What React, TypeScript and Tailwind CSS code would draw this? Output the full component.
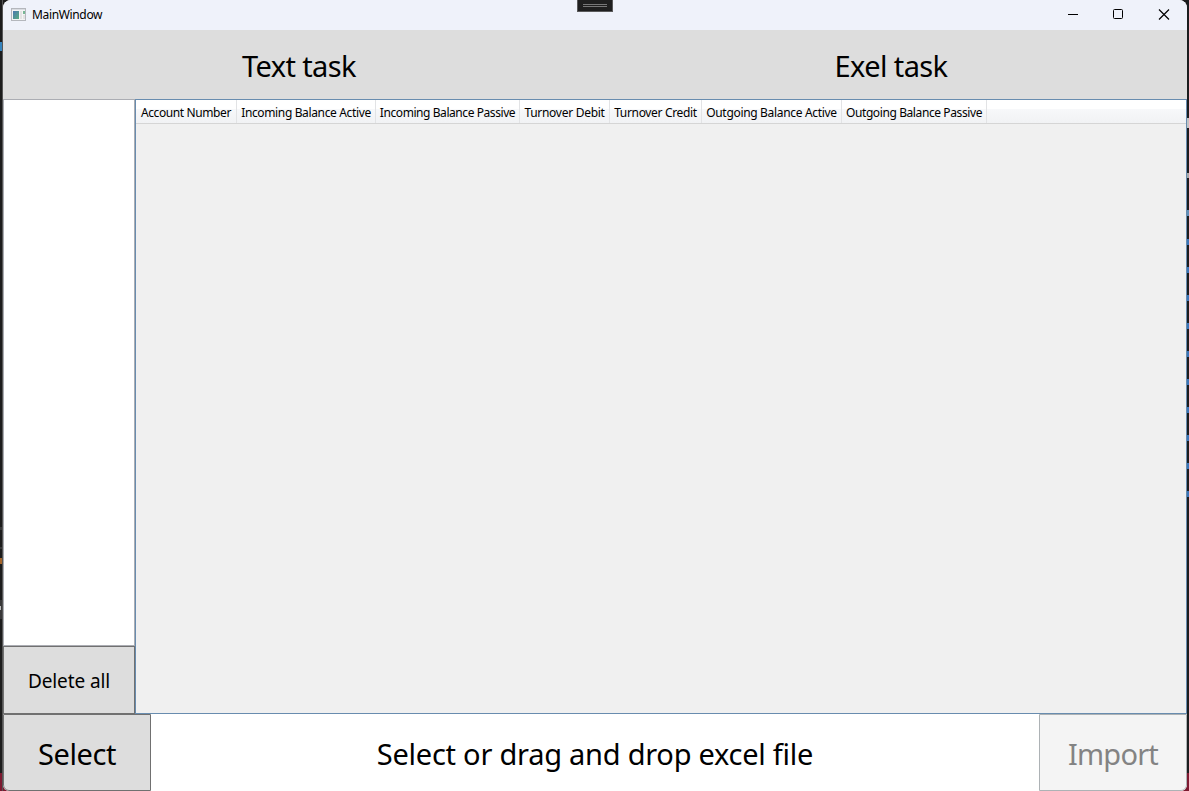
import React from "react";

const columns = [
  { name: "Account Number", width: "w-[101px]", tracking: "tracking-[-0.39px]" },
  { name: "Incoming Balance Active", width: "w-[139px]", tracking: "tracking-[-0.36px]" },
  { name: "Incoming Balance Passive", width: "w-[144px]", tracking: "tracking-[-0.43px]" },
  { name: "Turnover Debit", width: "w-[90px]", tracking: "tracking-[-0.28px]" },
  { name: "Turnover Credit", width: "w-[92px]", tracking: "tracking-[-0.33px]" },
  { name: "Outgoing Balance Active", width: "w-[140px]", tracking: "tracking-[-0.32px]" },
  { name: "Outgoing Balance Passive", width: "w-[145px]", tracking: "tracking-[-0.4px]" },
];

function AppIcon() {
  return (
    <svg width="15" height="14" viewBox="0 0 15 14" shapeRendering="crispEdges">
      <defs>
        <linearGradient id="pane" x1="0" y1="0" x2="1" y2="1">
          <stop offset="0" stopColor="#4b78b0" />
          <stop offset="1" stopColor="#58ad80" />
        </linearGradient>
      </defs>
      <rect x="0.5" y="0.5" width="14" height="12" fill="#f4f4f4" stroke="#b4b7bc" />
      <rect x="1" y="1" width="13" height="1" fill="#d9dce1" />
      <rect x="2" y="3" width="6" height="8" fill="url(#pane)" />
      <rect x="9" y="3" width="2" height="8" fill="#e3e3e3" />
      <rect x="12" y="3" width="2" height="3" fill="#78b795" />
      <rect x="12" y="7" width="2" height="4" fill="#e3e3e3" />
    </svg>
  );
}

function TitleBar() {
  return (
    <header className="relative flex h-[30px] shrink-0 items-center bg-[#eff2fa] pl-2">
      <AppIcon />
      <span className="ml-[6px] text-[12px] leading-4 tracking-[-0.35px]">MainWindow</span>
      <div className="absolute left-[574px] top-0 flex h-3 w-9 flex-col items-center gap-px border border-t-0 border-[#5a5a5a] bg-[#1f1f1f] pt-1">
        <div className="h-px w-6 bg-[#777]" />
        <div className="h-px w-6 bg-[#777]" />
      </div>
      <div className="ml-auto flex pr-px">
        <svg width="46" height="28" fill="none" stroke="#000" shapeRendering="crispEdges">
          <path d="M19 13.5h10" />
        </svg>
        <svg width="45" height="28" fill="none" stroke="#000">
          <rect x="18.5" y="8.5" width="9" height="9" rx="1" />
        </svg>
        <svg width="46" height="28" fill="none" stroke="#000" strokeWidth="1.2">
          <path d="M19 8.5l10 10M29 8.5l-10 10" />
        </svg>
      </div>
    </header>
  );
}

export default function App() {
  return (
    <div className="flex h-[791px] w-[1189px] overflow-hidden bg-[linear-gradient(to_bottom,#1c1c1c_773px,#7c1930_773px)] text-black [font-family:'Noto_Sans','Open_Sans',sans-serif]">
      <div className="flex w-[3px] shrink-0 flex-col border-r border-[#555]">
        <div className="mt-[42px] h-[9px] bg-[#3684bd]" />
        <div className="mt-[476px] h-[3px] bg-[#383838]" />
        <div className="mt-[17px] h-[2px] bg-[#383838]" />
        <div className="mt-[9px] h-[6px] bg-[#a5652b]" />
        <div className="mt-[36px] h-[19px] bg-[#383838] pt-[6px]">
          <div className="h-[4px] w-px bg-[#bbb]" />
        </div>
      </div>
      <div className="flex w-[1184px] shrink-0 flex-col overflow-hidden rounded-lg rounded-b-md bg-white">
        <TitleBar />
        <nav className="grid h-[69px] shrink-0 grid-cols-2 bg-[#ddd] text-center text-[29px] leading-[72px]">
          <button><span className="tracking-[-0.6px]">Text task</span></button>
          <button><span className="tracking-[-0.6px]">Exel task</span></button>
        </nav>
        <main className="flex h-[615px] shrink-0">
          <aside className="flex w-[132px] shrink-0 flex-col">
            <div className="h-[547px] border border-[#abadb3] bg-white" />
            <button className="h-[68px] border border-[#707070] bg-[#ddd] pt-[2px] text-[19px]">
              <span className="tracking-[-0.1px]">Delete all</span>
            </button>
          </aside>
          <section className="flex grow flex-col border border-[#688caf] bg-[#f0f0f0]">
            <div className="flex h-[24px] shrink-0 border-b border-[#d5d5d5] bg-[linear-gradient(to_bottom,#fff_0_40%,#f7f8fa_40%,#f1f2f4_100%)] text-[12px] leading-[26px]">
              {columns.map((c) => (
                <div key={c.name} className={`${c.width} flex shrink-0 justify-center whitespace-nowrap border-r border-[#e2e3e5]`}>
                  <span className={c.tracking}>{c.name}</span>
                </div>
              ))}
            </div>
          </section>
        </main>
        <footer className="flex h-[77px] shrink-0 text-[29px]">
          <button className="w-[148px] rounded-bl-md border border-[#707070] bg-[#ddd] pt-[3px]">
            <span className="tracking-[-0.4px]">Select</span>
          </button>
          <div className="flex grow items-center justify-center pt-[3px]">
            <span className="tracking-[-0.25px]">Select or drag and drop excel file</span>
          </div>
          <button disabled className="w-[148px] rounded-br-md border border-[#adb2b5] bg-[#f4f4f4] pt-[3px] text-[#838383]">
            <span className="tracking-[-0.8px]">Import</span>
          </button>
        </footer>
      </div>
      <div className="flex w-[2px] shrink-0 flex-col bg-[#1b1d1e]">
        <div className="mt-[118px] h-[10px] bg-[#c4c4c4]" />
        <div className="mt-[45px] h-[5px] bg-[#aaa]" />
        <div className="mt-[32px] h-[6px] bg-[#6290b8]" />
        <div className="mt-[23px] flex flex-col gap-[22px]">
          {Array.from({ length: 10 }, (_, i) => (
            <div key={i} className="h-[6px] bg-[#3b75b7]" />
          ))}
        </div>
        <div className="mt-auto h-[18px] bg-[#7c1930]" />
      </div>
    </div>
  );
}
